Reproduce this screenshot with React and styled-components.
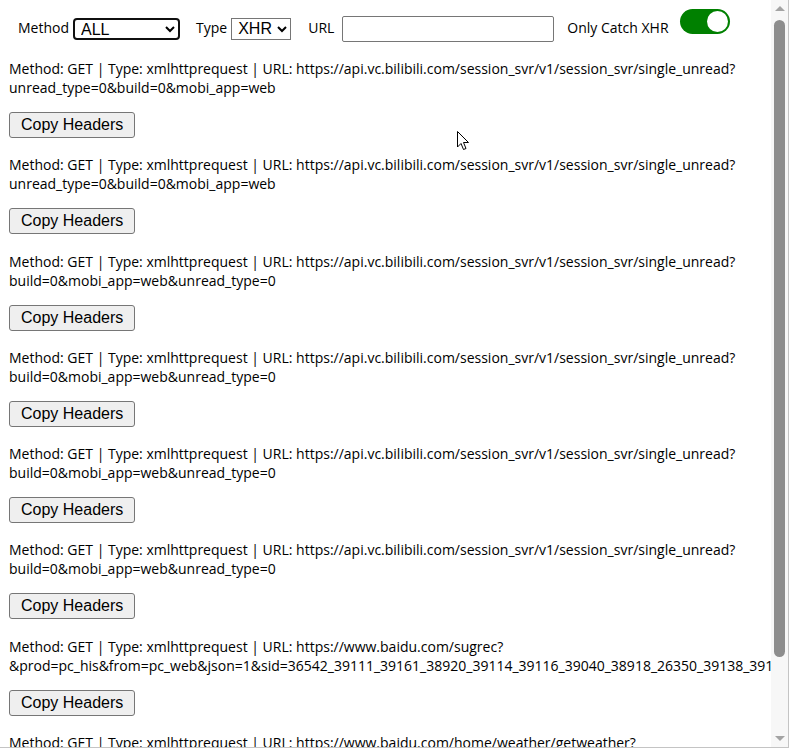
import React, { useEffect, useRef, useState } from "react";
import styled, { createGlobalStyle } from "styled-components";

const GlobalStyle = createGlobalStyle`
  html, body {
    margin: 0;
    padding: 0;
    background: #fff;
  }
  body {
    font-family: "Open Sans", "Noto Sans", sans-serif;
    font-size: 14px;
    color: #000;
  }
`;

const Frame = styled.div`
  position: relative;
  box-sizing: border-box;
  width: 789px;
  height: 748px;
  border-right: 1px solid #c4c4c4;
  border-bottom: 1px solid #c4c4c4;
  display: flex;
`;

const Viewport = styled.div`
  flex: 1;
  min-width: 0;
  overflow-y: auto;
  overflow-x: hidden;
  scrollbar-width: none;
`;

const Page = styled.div`
  padding: 8px 8px 0 9px;
`;

const Toolbar = styled.div`
  display: flex;
  align-items: center;
  padding: 8px 9px 0;
  height: 26px;
`;

const Label = styled.span`
  margin-right: ${({ gap }) => gap || 4}px;
  margin-bottom: 3px;
  white-space: nowrap;
`;

const Select = styled.select`
  box-sizing: border-box;
  height: 22px;
  width: ${({ w }) => w}px;
  margin-right: ${({ mr }) => mr}px;
  margin-bottom: 1px;
  padding: 0 0 0 2px;
  font-family: "Liberation Sans", Arial, sans-serif;
  font-size: 16px;
  color: #000;
  background: #fff;
  border: ${({ focused }) => (focused ? "2px solid #101010" : "1px solid #767676")};
  border-radius: ${({ focused }) => (focused ? 4 : 0)}px;
  outline: none;
`;

const UrlInput = styled.input`
  box-sizing: border-box;
  width: 212px;
  height: 26px;
  margin-right: 13px;
  padding: 1px 2px;
  border: 1px solid #767676;
  border-radius: 2px;
  font-size: 14px;
`;

const Switch = styled.div`
  box-sizing: border-box;
  width: 50px;
  height: 25px;
  margin-left: 3px;
  margin-bottom: 16px;
  padding: 2px;
  border-radius: 13px;
  background: #008000;
  display: flex;
  justify-content: ${({ on }) => (on ? "flex-end" : "flex-start")};
`;

const Knob = styled.div`
  width: 21px;
  height: 21px;
  border-radius: 50%;
  background: #fff;
`;

const List = styled.div`
  padding-top: 17px;
`;

const Entry = styled.div`
  padding-bottom: 17.3px;
`;

const EntryText = styled.div`
  line-height: 19px;
  margin-bottom: 15px;
`;

const CopyButton = styled.button`
  box-sizing: border-box;
  height: 26px;
  padding: 0 11px;
  font-family: "Liberation Sans", Arial, sans-serif;
  font-size: 16px;
  color: #000;
  background: #efefef;
  border: 1px solid #767676;
  border-radius: 3px;
`;

/* fake classic scrollbar, the headless browser hides the real one */
const ScrollBar = styled.div`
  width: 17px;
  background: #f7f7f7;
  display: flex;
  flex-direction: column;
`;

const ArrowButton = styled.div`
  height: 17px;
  display: flex;
  align-items: center;
  justify-content: center;

  &::before {
    content: "";
    width: 0;
    height: 0;
    border-left: 5px solid transparent;
    border-right: 5px solid transparent;
    ${({ down }) => (down ? "border-top" : "border-bottom")}: 5px solid #a3a3a3;
  }
`;

const Track = styled.div`
  flex: 1;
  position: relative;
`;

const Thumb = styled.div`
  position: absolute;
  left: 3px;
  right: 3px;
  border-radius: 6px;
  background: #8d8d8d;
`;

const Cursor = styled.svg`
  position: absolute;
  left: 457px;
  top: 131px;
  pointer-events: none;
`;

const bili = "https://api.vc.bilibili.com/session_svr/v1/session_svr/single_unread?";

const requests = [
  bili + "unread_type=0&build=0&mobi_app=web",
  bili + "unread_type=0&build=0&mobi_app=web",
  bili + "build=0&mobi_app=web&unread_type=0",
  bili + "build=0&mobi_app=web&unread_type=0",
  bili + "build=0&mobi_app=web&unread_type=0",
  bili + "build=0&mobi_app=web&unread_type=0",
  "https://www.baidu.com/sugrec?&prod=pc_his&from=pc_web&json=1&sid=36542_39111_39161_38920_39114_39116_39040_38918_26350_39138_39137_39101&hisdata=&_t=1688034567123&csor=0",
  "https://www.baidu.com/home/weather/getweather?citylist=0&indextype=manht&_req_seqid=0xd1a4c0b500028a7f&asyn=1&t=1688034567321&sid=36542_39111",
];

export default function App() {
  const viewRef = useRef(null);
  const trackRef = useRef(null);
  const [thumb, setThumb] = useState({ top: 3, height: 648 });

  const update = () => {
    const view = viewRef.current;
    const track = trackRef.current;
    if (!view || !track) return;
    const len = track.clientHeight - 6;
    const ratio = view.clientHeight / view.scrollHeight;
    const height = Math.min(len, len * ratio);
    const max = view.scrollHeight - view.clientHeight;
    const top = 3 + (max > 0 ? (view.scrollTop / max) * (len - height) : 0);
    setThumb({ top, height });
  };

  useEffect(update, []);

  return (
    <>
      <GlobalStyle />
      <Frame>
        <Viewport ref={viewRef} onScroll={update}>
          <Page>
            <Toolbar>
              <Label>Method</Label>
              <Select w={107} mr={16} focused defaultValue="ALL">
                <option>ALL</option>
                <option>GET</option>
                <option>POST</option>
              </Select>
              <Label>Type</Label>
              <Select w={60} mr={17} defaultValue="XHR">
                <option>XHR</option>
                <option>ALL</option>
              </Select>
              <Label gap={8}>URL</Label>
              <UrlInput type="text" />
              <Label gap={8}>Only Catch XHR</Label>
              <Switch on>
                <Knob />
              </Switch>
            </Toolbar>
            <List>
              {requests.map((url, i) => (
                <Entry key={i}>
                  <EntryText>
                    Method: GET | Type: xmlhttprequest | URL: {url}
                  </EntryText>
                  <CopyButton>Copy Headers</CopyButton>
                </Entry>
              ))}
            </List>
          </Page>
        </Viewport>
        <ScrollBar>
          <ArrowButton />
          <Track ref={trackRef}>
            <Thumb style={{ top: thumb.top, height: thumb.height }} />
          </Track>
          <ArrowButton down />
        </ScrollBar>
        <Cursor width="13" height="20" viewBox="0 0 13 20">
          <path d="M0.5 0.5 L0.5 16 L4 12.5 L6.5 18.5 L9 17.5 L6.5 11.5 L11.5 11.5 Z" fill="#fff" stroke="#000" strokeWidth="1" />
        </Cursor>
      </Frame>
    </>
  );
}
